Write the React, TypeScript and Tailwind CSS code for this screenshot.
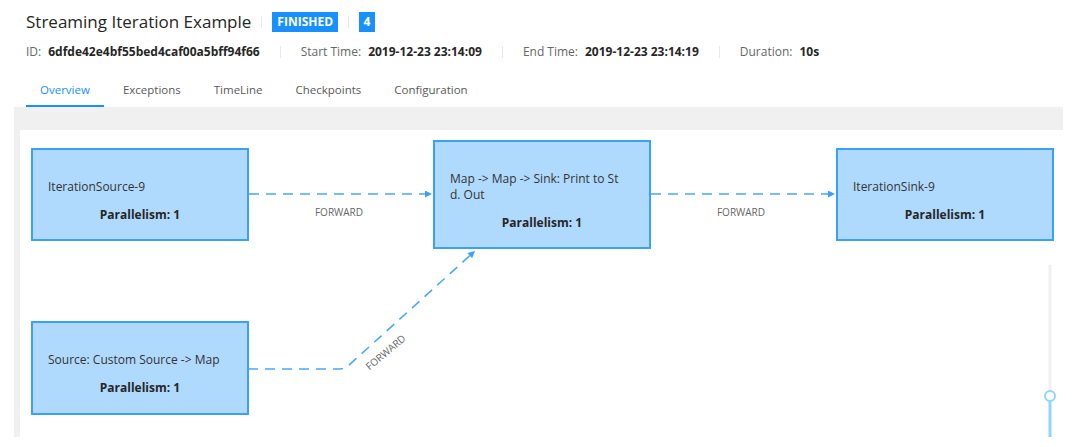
import React from "react";

const FONT = { fontFamily: '"Open Sans", "Noto Sans", Arial, sans-serif' };

function Sep() {
  return <span className="mx-[10px] inline-block h-[12px] w-px bg-[#e8e8e8]" />;
}

function MetaItem({ label, value, last }: { label: string; value: string; last?: boolean }) {
  return (
    <div className="flex items-center">
      <span className="text-[#666]">{label}</span>
      <span className="ml-[7px] font-bold text-[#262626]">{value}</span>
      {!last && <span className="mx-[20px] inline-block h-[12px] w-px bg-[#e8e8e8]" />}
    </div>
  );
}

type NodeProps = { x: number; y: number; w: number; h: number; lines: string[] };

function Node({ x, y, w, h, lines }: NodeProps) {
  return (
    <div
      className="absolute flex flex-col border-2 border-[#3da0f7] bg-[#b0dafd] pt-[29px] text-[12px] leading-[16px] text-[#333]"
      style={{ left: x, top: y, width: w, height: h }}
    >
      <div className="pl-[15px]">
        {lines.map((l, i) => (
          <div key={i} className="whitespace-nowrap">{l}</div>
        ))}
      </div>
      <div className="mt-[12px] text-center font-bold text-[#262626]">Parallelism: 1</div>
    </div>
  );
}

export default function App() {
  const tabs = ["Overview", "Exceptions", "TimeLine", "Checkpoints", "Configuration"];
  return (
    <div className="h-[447px] w-[1082px] overflow-hidden bg-white" style={FONT}>
      <div className="px-[26px] pt-[8px]">
        <div className="flex h-[28px] items-center">
          <span className="text-[17px] text-[#262626]">Streaming Iteration Example</span>
          <Sep />
          <span className="flex h-[20px] items-center bg-[#1890ff] px-[5px] text-[12px] font-bold text-white">FINISHED</span>
          <Sep />
          <span className="flex h-[20px] w-[16px] items-center justify-center bg-[#1890ff] text-[12px] font-bold text-white">4</span>
        </div>
        <div className="mt-[8px] flex h-[16px] items-center text-[12px]">
          <MetaItem label="ID:" value="6dfde42e4bf55bed4caf00a5bff94f66" />
          <MetaItem label="Start Time:" value="2019-12-23 23:14:09" />
          <MetaItem label="End Time:" value="2019-12-23 23:14:19" />
          <MetaItem label="Duration:" value="10s" last />
        </div>
      </div>
      <div className="mt-[13px] flex gap-[5px] pl-[26px] text-[11.5px]">
        {tabs.map((t, i) => (
          <div
            key={t}
            className={
              i === 0
                ? "flex h-[34px] items-center border-b-2 border-[#1890ff] px-[14px] pt-[2px] text-[#1890ff]"
                : "flex h-[34px] items-center border-b-2 border-transparent px-[14px] pt-[2px] text-[#595959]"
            }
          >
            {t}
          </div>
        ))}
      </div>
      <div className="ml-[14px] h-[330px] w-[1049px] bg-[#f0f0f0] pl-[6px] pt-[23px]">
        <div className="relative h-full w-full overflow-hidden bg-white">
          <svg className="absolute left-0 top-0" width={1043} height={307}>
            <defs>
              <marker id="arr" viewBox="0 0 10 10" refX="10" refY="5" markerWidth="9" markerHeight="7" orient="auto" markerUnits="userSpaceOnUse">
                <path d="M0,0 L10,5 L0,10 z" fill="#3da0f7" />
              </marker>
            </defs>
            <g fill="none" stroke="#4aa8f8" strokeWidth={1.6} strokeDasharray="10 7">
              <path d="M229,64 L412,64" markerEnd="url(#arr)" />
              <path d="M631,64 L815,64" markerEnd="url(#arr)" />
              <path d="M228,239 L320,239 Q324,239 328,236 L455,121" markerEnd="url(#arr)" />
            </g>
            <g fill="#666" fontSize="10" style={FONT}>
              <text x={319} y={86} textAnchor="middle">FORWARD</text>
              <text x={721} y={86} textAnchor="middle">FORWARD</text>
              <text x={0} y={0} textAnchor="middle" transform="translate(368,225) rotate(-40)">FORWARD</text>
            </g>
            <line x1={1030} y1={135} x2={1030} y2={261} stroke="#f0f0f0" strokeWidth={3} />
            <line x1={1030} y1={271} x2={1030} y2={307} stroke="#91d5ff" strokeWidth={3} />
            <circle cx={1030} cy={266} r={5} fill="white" stroke="#91d5ff" strokeWidth={2} />
          </svg>
          <Node x={11} y={18} w={218} h={93} lines={["IterationSource-9"]} />
          <Node x={413} y={10} w={218} h={109} lines={["Map -> Map -> Sink: Print to St", "d. Out"]} />
          <Node x={816} y={18} w={218} h={93} lines={["IterationSink-9"]} />
          <Node x={11} y={191} w={218} h={94} lines={["Source: Custom Source -> Map"]} />
        </div>
      </div>
    </div>
  );
}
